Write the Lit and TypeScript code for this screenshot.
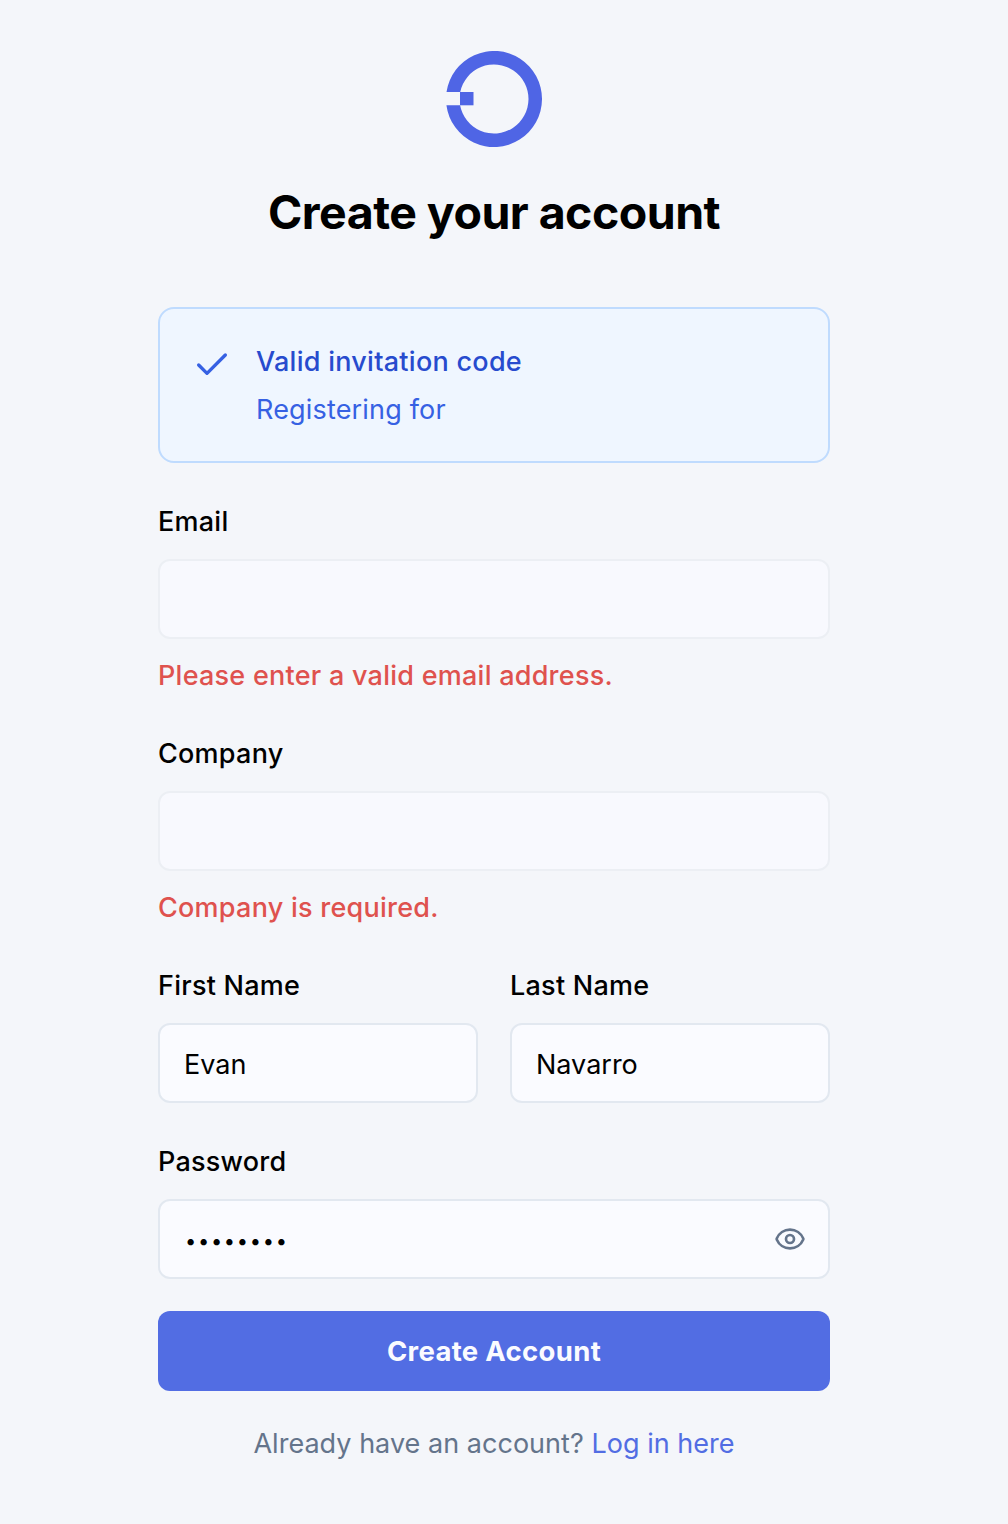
import { LitElement, html, css, nothing } from "lit";
import { customElement, property, state } from "lit/decorators.js";

@customElement("form-field")
class FormField extends LitElement {
  @property() label = "";
  @property() value = "";
  @property() type = "text";
  @property() error = "";
  @property({ type: Boolean }) disabled = false;
  @state() private revealed = false;

  static styles = css`
    :host {
      display: block;
      min-width: 0;
    }
    .label {
      display: block;
      font-weight: 500;
      line-height: 30px;
      margin-bottom: 22px;
      letter-spacing: 0.25px;
    }
    .box {
      display: flex;
      align-items: center;
      box-sizing: border-box;
      height: 80px;
      padding: 0 22px 0 24px;
      border: 2px solid #e2e8f0;
      border-radius: 12px;
      background: #fafbff;
    }
    .box.disabled {
      border-color: #eceff4;
      background: #f8f9fe;
    }
    .input {
      flex: 1;
      min-width: 0;
      height: 40px;
      margin: 3px 0 0;
      padding: 0;
      border: 0;
      outline: 0;
      background: transparent;
      color: #000;
      font: inherit;
    }
    .input.password {
      margin-top: 1px;
      font-size: 20px;
      letter-spacing: 1.7px;
      padding: 2px 0 0 1px;
    }
    .toggle {
      display: flex;
      padding: 0;
      border: 0;
      background: none;
      color: #64748b;
    }
    .error {
      margin: 16px 0 -1px;
      line-height: 41px;
      font-weight: 500;
      letter-spacing: 0.25px;
      color: #df524e;
    }
  `;

  render() {
    return html`
      <label class="label" for="input">${this.label}</label>
      <div class="box ${this.disabled ? "disabled" : ""}">
        <input
          id="input"
          class="input ${this.type}"
          type=${this.revealed ? "text" : this.type}
          .value=${this.value}
          ?disabled=${this.disabled}
        />
        ${this.type === "password"
          ? html`<button
              class="toggle"
              type="button"
              @click=${() => (this.revealed = !this.revealed)}
            >
              <svg width="32" height="32" viewBox="0 0 24 24" fill="none" stroke="currentColor" stroke-width="2" stroke-linecap="round" stroke-linejoin="round">
                <path d="M2.062 12.348a1 1 0 0 1 0-.696 10.75 10.75 0 0 1 19.876 0 1 1 0 0 1 0 .696 10.75 10.75 0 0 1-19.876 0" />
                <circle cx="12" cy="12" r="3" />
              </svg>
            </button>`
          : nothing}
      </div>
      ${this.error ? html`<p class="error">${this.error}</p>` : nothing}
    `;
  }
}

@customElement("app-root")
class AppRoot extends LitElement {
  static styles = css`
    :host {
      display: block;
      box-sizing: border-box;
      min-height: 1524px;
      padding: 51px 178px 0 158px;
      background: #f4f6fa;
      color: #000;
      font-family: Inter, "Liberation Sans", sans-serif;
      font-size: 27px;
      line-height: 40px;
    }
    .logo {
      display: block;
      margin: 0 auto;
      color: #4f65e5;
    }
    .title {
      margin: 34px 0 64px;
      font-size: 46.5px;
      line-height: 62px;
      font-weight: 700;
      letter-spacing: -0.54px;
      text-align: center;
      white-space: nowrap;
    }
    .notice {
      display: flex;
      gap: 24px;
      box-sizing: border-box;
      height: 156px;
      padding: 32px;
      border: 2px solid #bfdbfe;
      border-radius: 16px;
      background: #eff6ff;
      color: #3661e3;
    }
    .check {
      flex: none;
      margin-top: 4px;
    }
    .notice-text {
      display: grid;
      gap: 8px;
      align-content: start;
      padding-top: 1px;
      letter-spacing: 0.17px;
    }
    .notice-title {
      font-weight: 500;
      letter-spacing: 0.27px;
      color: #274bce;
    }
    .form {
      display: grid;
      gap: 44px;
      margin-top: 44px;
    }
    .names {
      display: grid;
      grid-template-columns: 1fr 1fr;
      gap: 32px;
    }
    .submit {
      display: block;
      width: 100%;
      height: 80px;
      margin-top: 32px;
      padding: 0 0 1px;
      border: 0;
      border-radius: 12px;
      background: #526de3;
      color: #fafbff;
      font: inherit;
      font-size: 27.5px;
      font-weight: 650;
      letter-spacing: 0.32px;
    }
    .footer {
      margin: 33px 0 0;
      text-align: center;
      color: #64748b;
      letter-spacing: 0.03px;
    }
    .link {
      color: #526de3;
      text-decoration: none;
    }
  `;

  render() {
    return html`
      <svg class="logo" width="96" height="96" viewBox="0 0 96 96" fill="currentColor">
        <path d="M.51 41A48 48 0 1 1 .42 54.3H14.08A34.5 34.5 0 1 0 14.22 41Z" />
        <path d="M14 41h13.5v13.3H14z" />
      </svg>
      <h1 class="title">Create your account</h1>
      <div class="notice">
        <svg class="check" width="40" height="40" viewBox="0 0 24 24" fill="none" stroke="currentColor" stroke-width="2" stroke-linecap="round" stroke-linejoin="round">
          <path d="M20 6 9 17l-5-5" />
        </svg>
        <div class="notice-text">
          <div class="notice-title">Valid invitation code</div>
          <div>Registering for</div>
        </div>
      </div>
      <div class="form">
        <form-field label="Email" error="Please enter a valid email address." disabled></form-field>
        <form-field label="Company" error="Company is required." disabled></form-field>
        <div class="names">
          <form-field label="First Name" value="Evan"></form-field>
          <form-field label="Last Name" value="Navarro"></form-field>
        </div>
        <form-field label="Password" type="password" value="password"></form-field>
      </div>
      <button class="submit" type="button">Create Account</button>
      <p class="footer">Already have an account? <a class="link" href="#">Log in here</a></p>
    `;
  }
}
